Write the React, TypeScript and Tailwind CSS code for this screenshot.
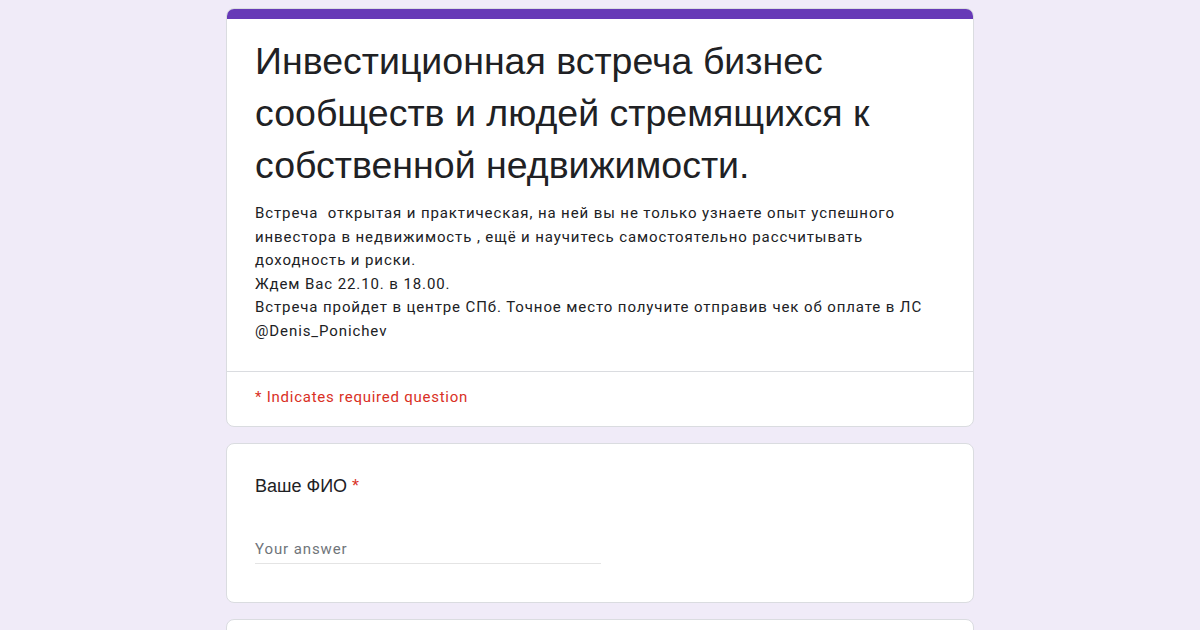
export default function App() {
  return (
    <div className="min-h-screen bg-[#f0ebf8] pt-2 font-['Roboto',sans-serif] text-[#202124]">
      <div className="mx-auto flex w-[748px] flex-col gap-4">
        <div className="overflow-hidden rounded-lg border border-[#dadce0] bg-white">
          <div className="h-[10px] bg-[#673ab7]" />
          <div className="px-[28px] pb-7 pt-4">
            <h1 className="font-['Liberation_Sans',Arial,sans-serif] text-[37.5px] leading-[52px] text-[#202124]">
              Инвестиционная встреча бизнес сообществ и людей стремящихся к собственной недвижимости.
            </h1>
            <p className="mt-[11px] text-[15px] leading-[23.5px] tracking-[0.9px]">
              Встреча&nbsp; открытая и практическая, на ней вы не только узнаете опыт успешного
              <br />
              инвестора в недвижимость , ещё и научитесь самостоятельно рассчитывать
              <br />
              доходность и риски.
              <br />
              Ждем Вас 22.10. в 18.00.
              <br />
              Встреча пройдет в центре СПб. Точное место получите отправив чек об оплате в ЛС
              <br />
              @Denis_Ponichev
            </p>
          </div>
          <div className="border-t border-[#dadce0] px-[28px] pb-[19px] pt-[15px]">
            <p className="text-[15px] leading-5 tracking-[0.75px] text-[#d93025]">* Indicates required question</p>
          </div>
        </div>

        <div className="rounded-lg border border-[#dadce0] bg-white px-[28px] pb-[38px] pt-[30px]">
          <div className="font-['Liberation_Sans',Arial,sans-serif] text-[18px] leading-6">
            Ваше ФИО <span className="text-[#d93025]">*</span>
          </div>
          <div className="mt-[41px] w-[346px] border-b border-[#e4e4e4] pb-1 text-[15px] leading-5 tracking-[0.9px] text-[#70757a]">
            Your answer
          </div>
        </div>

        <div className="h-[60px] rounded-lg border border-[#dadce0] bg-white" />
      </div>
    </div>
  );
}
